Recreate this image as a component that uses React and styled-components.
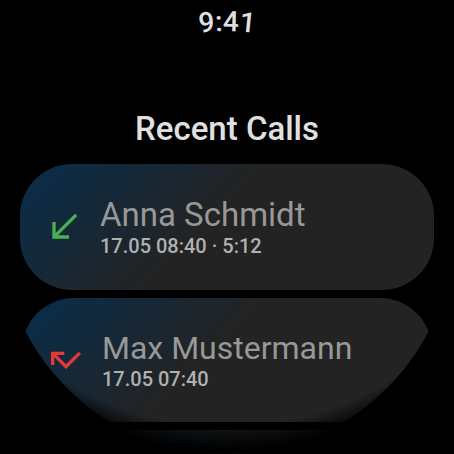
import React from "react";
import styled, { createGlobalStyle } from "styled-components";
import { MdCallReceived, MdCallMissed } from "react-icons/md";

const calls = [
  { id: 1, name: "Anna Schmidt", info: "17.05 08:40 · 5:12" },
  { id: 2, name: "Max Mustermann", info: "17.05 07:40", missed: true },
];

const App = () => {
  return (
    <React.Fragment>
      <GlobalStyle />
      <Screen>
        <Clock viewBox="0 0 454 48" role="img" aria-label="9:41">
          <path id="clock-arc" d="M 32 226 A 195 195 0 0 1 422 226" fill="none" />
          <ClockText>
            <textPath href="#clock-arc" startOffset="50%">
              9:41
            </textPath>
          </ClockText>
        </Clock>
        <Title>Recent Calls</Title>
        <List>
          {calls.map((c, index) => {
            return (
              <li key={c.id}>
                <Card $far={index > 0}>
                  <Icon $missed={c.missed}>
                    {c.missed ? <MdCallMissed /> : <MdCallReceived />}
                  </Icon>
                  <Texts>
                    <Name $far={index > 0}>{c.name}</Name>
                    <Info>{c.info}</Info>
                  </Texts>
                </Card>
              </li>
            );
          })}
          <li>
            <NextCard />
          </li>
        </List>
        <Vignette />
      </Screen>
    </React.Fragment>
  );
};

const GlobalStyle = createGlobalStyle`
  body {
    margin: 0;
    background-color: #000000;
    font-family: Roboto, sans-serif;
  }
`;

// round watch face, everything outside of the circle is cut off
const Screen = styled.main`
  position: relative;
  width: 100%;
  aspect-ratio: 1;
  overflow: hidden;
  background-color: #000000;
  border-radius: 50%;
`;

const Clock = styled.svg`
  display: block;
  width: 100%;
`;

const ClockText = styled.text`
  fill: #e0e0e0;
  font-size: 28px;
  font-weight: 500;
  text-anchor: middle;
`;

const Title = styled.h1`
  margin: 61px 0 15px;
  color: #e0e0e0;
  font-size: 33px;
  font-weight: 500;
  line-height: 40px;
  text-align: center;
`;

const List = styled.ul`
  display: flex;
  flex-direction: column;
  gap: 8px;
  margin: 0;
  padding: 0 20px;
  list-style: none;
`;

const Card = styled.button`
  display: flex;
  align-items: center;
  gap: 16px;
  width: ${(props) => (props.$far ? "calc(100% - 4px)" : "100%")};
  height: ${(props) => (props.$far ? "124px" : "126px")};
  margin: 0 auto;
  padding: 0 24px;
  box-sizing: border-box;
  border: 0;
  border-radius: 52px;
  background: linear-gradient(135deg, #0b2c47 6%, #232323 46%);
  font-family: inherit;
  text-align: left;
`;

const Icon = styled.span`
  display: flex;
  color: ${(props) => (props.$missed ? "#e53935" : "#4caf50")};
  font-size: 40px;
`;

const Texts = styled.span`
  display: flex;
  flex-direction: column;
`;

const Name = styled.span`
  color: #989898;
  font-size: ${(props) => (props.$far ? "32px" : "33px")};
  line-height: 38px;
`;

const Info = styled.span`
  color: #b0b0b0;
  font-size: 20px;
  font-weight: 500;
  line-height: 24px;
`;

// top edge of the card that is still below the screen
const NextCard = styled.div`
  height: 124px;
  margin: 0 4px;
  border-radius: 52px;
  background: linear-gradient(135deg, #0b2c47 6%, #232323 46%);
  opacity: 0.6;
`;

const Vignette = styled.div`
  position: absolute;
  inset: 0;
  background: radial-gradient(ellipse 66% 57% at 50% 42%, transparent 91%, #000000 100%);
  pointer-events: none;
`;

export default App;
